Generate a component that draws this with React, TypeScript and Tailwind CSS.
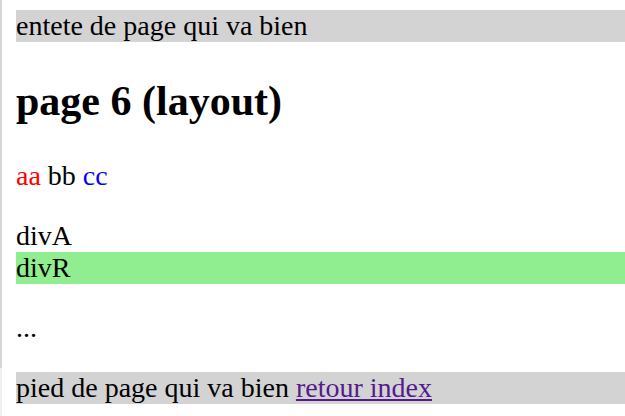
export default function App() {
  return (
    <div className="flex min-h-[416px] bg-white [font-family:'Liberation_Serif','Times_New_Roman',serif] text-[28px] leading-[32px] text-black">
      <div className="flex w-[2px] flex-col">
        <div className="h-[368px] bg-[#d6d6d6]" />
        <div className="flex-1 bg-[#f0f0f0]" />
      </div>

      <div className="flex-1 pl-[14px] pt-[10px]">
        <header className="bg-[#d3d3d3]">entete de page qui va bien</header>

        <section>
          <h1 className="my-[35px] text-[42px] leading-[48px] font-bold">
            page 6 (layout)
          </h1>

          <p>
            <span className="text-[#ff0000]">aa</span> bb{" "}
            <span className="text-[#0000ff]">cc</span>
          </p>

          <div className="mt-[28px]">divA</div>
          <div className="bg-[#90ee90]">divR</div>

          <p className="my-[28px]">...</p>
        </section>

        <footer className="bg-[#d3d3d3]">
          pied de page qui va bien{" "}
          <a href="#" className="text-[#551a8b] underline">
            retour index
          </a>
        </footer>
      </div>
    </div>
  );
}
